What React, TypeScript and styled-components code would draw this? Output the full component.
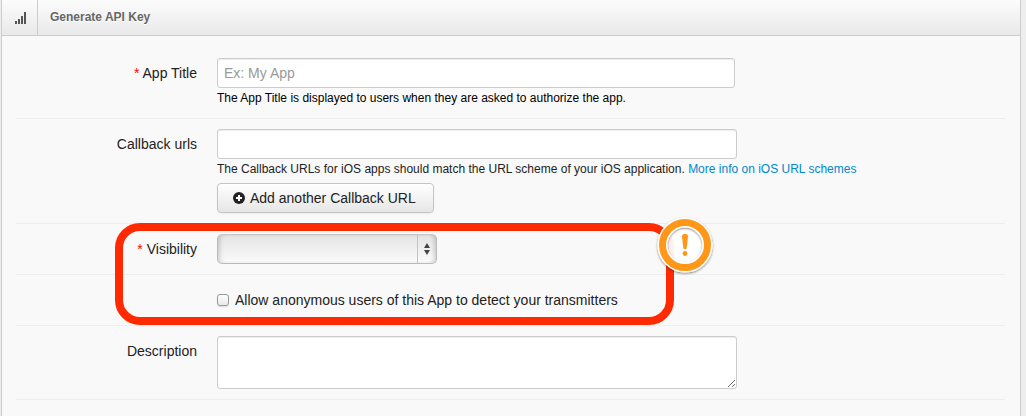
import React from "react";
import styled, { createGlobalStyle } from "styled-components";

const GlobalStyle = createGlobalStyle`
  *, *::before, *::after { box-sizing: border-box; }
  body {
    margin: 0;
    background: #eee;
    color: #222;
    font: 14px/20px "Liberation Sans", Arial, sans-serif;
  }
  input, textarea, select, button { font: inherit; color: inherit; margin: 0; }
`;

const Panel = styled.main`
  margin: 0 5px 0 1px;
  min-height: 100vh;
  background: #f9f9f9;
  border: 1px solid #ccc;
  border-width: 0 1px;
`;

const Header = styled.header`
  display: flex;
  height: 36px;
  border-bottom: 1px solid #ccc;
  background: linear-gradient(#fcfcfc, #e9e9e9);
`;

const HeaderIcon = styled.span`
  display: flex;
  align-items: center;
  justify-content: center;
  width: 36px;
  padding-left: 2px;
  border-right: 1px solid #ccc;
`;

const Title = styled.h1`
  margin: 0;
  padding: 7px 12px;
  font-size: 12px;
  line-height: 20px;
  color: #666;
  text-shadow: 0 1px 0 #fff;
`;

const Form = styled.form`
  padding: 12px 15px 0 14px;
`;

const Row = styled.div`
  display: grid;
  grid-template-columns: 181px minmax(0, 1fr);
  column-gap: 20px;
  padding: 10px 0;
  border-bottom: 1px solid #eee;
`;

const Label = styled.label`
  padding: 5px 0;
  text-align: right;
`;

const Required = styled.span`
  color: #f00;
`;

const TextInput = styled.input<{ $max: number }>`
  display: block;
  width: 100%;
  max-width: ${(p) => p.$max}px;
  height: 30px;
  padding: 4px 6px;
  background: #fff;
  border: 1px solid #ccc;
  border-radius: 3px;
  box-shadow: inset 0 1px 1px rgba(0, 0, 0, 0.075);
  &::placeholder { color: #999; opacity: 1; }
`;

const TextArea = styled.textarea`
  display: block;
  width: 100%;
  max-width: 520px;
  height: 53px;
  padding: 4px 6px;
  background: #fff;
  border: 1px solid #ccc;
  border-radius: 3px;
  box-shadow: inset 0 1px 1px rgba(0, 0, 0, 0.075);
  resize: both;
`;

const Help = styled.p<{ $strong?: boolean }>`
  margin: 0;
  font-size: 12px;
  line-height: 20px;
  color: ${(p) => (p.$strong ? "#000" : "#222")};
`;

const Link = styled.a`
  color: #08c;
  text-decoration: none;
`;

const Button = styled.button`
  display: flex;
  align-items: center;
  gap: 5px;
  height: 30px;
  margin-top: 4px;
  padding: 0 17px 0 15px;
  border: 1px solid #c5c5c5;
  border-radius: 4px;
  background: linear-gradient(#fff, #e6e6e6);
  box-shadow: 0 1px 2px rgba(0, 0, 0, 0.05);
  white-space: nowrap;
`;

const SelectBox = styled.div`
  display: grid;
  grid-template-columns: 1fr 19px;
  max-width: 220px;
  height: 30px;
  border: 1px solid #bbb;
  border-top-color: #c8c8c8;
  border-radius: 5px;
  background: linear-gradient(#e4e4e4, #fbfbfb);
  box-shadow: inset 4px 0 4px -2px rgba(0, 0, 0, 0.16), inset -4px 0 4px -2px rgba(0, 0, 0, 0.16);
`;

const Select = styled.select`
  grid-area: 1 / 1 / 2 / 3;
  appearance: none;
  width: 100%;
  padding: 0 26px 0 6px;
  border: 0;
  background: transparent;
`;

const SelectArrows = styled.span`
  grid-area: 1 / 2;
  display: flex;
  align-items: center;
  justify-content: center;
  border-left: 1px solid #c4c4c4;
  pointer-events: none;
`;

const CheckLabel = styled.label`
  grid-column: 2;
  display: flex;
  align-items: center;
  gap: 6px;
  padding: 5px 0;
`;

const Checkbox = styled.input`
  appearance: none;
  flex: none;
  width: 12px;
  height: 12px;
  border: 1px solid #999;
  border-radius: 3px;
  background: linear-gradient(#fff, #e8e8e8);
  box-shadow: 0 1px 1px rgba(0, 0, 0, 0.12);
  &:checked { background: #777; }
`;

const Highlighted = styled.div`
  position: relative;
`;

const Outline = styled.div`
  position: absolute;
  top: -1px;
  bottom: 1px;
  left: 99px;
  width: 559px;
  border: 8px solid #ff2a00;
  border-radius: 25px;
  pointer-events: none;
`;

const Warning = styled.svg`
  position: absolute;
  top: -18px;
  right: -51px;
`;

export default function App() {
  return (
    <>
      <GlobalStyle />
      <Panel>
        <Header>
          <HeaderIcon>
            <svg width="12" height="12" viewBox="0 0 12 12" fill="#555" aria-hidden="true">
              <path d="M0 9h2v3H0zM3 7h2v5H3zM6 4h2v8H6zM9 0h2v12H9z" />
            </svg>
          </HeaderIcon>
          <Title>Generate API Key</Title>
        </Header>
        <Form onSubmit={(e) => e.preventDefault()}>
          <Row>
            <Label htmlFor="title"><Required>*</Required> App Title</Label>
            <div>
              <TextInput id="title" $max={518} placeholder="Ex: My App" />
              <Help $strong>The App Title is displayed to users when they are asked to authorize the app.</Help>
            </div>
          </Row>
          <Row>
            <Label htmlFor="callback">Callback urls</Label>
            <div>
              <TextInput id="callback" $max={520} />
              <Help>
                The Callback URLs for iOS apps should match the URL scheme of your iOS application.{" "}
                <Link href="#schemes">More info on iOS URL schemes</Link>
              </Help>
              <Button type="button">
                <svg width="12" height="12" viewBox="0 0 12 12" aria-hidden="true">
                  <circle cx="6" cy="6" r="6" fill="#222" />
                  <path d="M5 3h2v2h2v2H7v2H5V7H3V5h2z" fill="#fff" />
                </svg>
                Add another Callback URL
              </Button>
            </div>
          </Row>
          <Highlighted>
            <Row>
              <Label htmlFor="visibility"><Required>*</Required> Visibility</Label>
              <SelectBox>
                <Select id="visibility" defaultValue=""><option value="" /></Select>
                <SelectArrows>
                  <svg width="8" height="14" viewBox="0 0 8 14" fill="#444" aria-hidden="true">
                    <path d="M4 1l3 5H1zM4 13l3-5H1z" />
                  </svg>
                </SelectArrows>
              </SelectBox>
            </Row>
            <Row>
              <CheckLabel>
                <Checkbox type="checkbox" />
                Allow anonymous users of this App to detect your transmitters
              </CheckLabel>
            </Row>
            <Outline>
              <Warning width="64" height="64" viewBox="0 0 64 64" role="img" aria-label="Important">
                <defs>
                  <filter id="shade" x="-20%" y="-20%" width="140%" height="140%">
                    <feDropShadow dx="0" dy="1" stdDeviation="1.2" floodColor="#000" floodOpacity="0.5" />
                  </filter>
                </defs>
                <circle cx="32" cy="32" r="18" fill="#fff" fillOpacity="0.93" />
                <circle cx="32" cy="32" r="22.5" fill="none" stroke="#fff" strokeWidth="10" filter="url(#shade)" />
                <circle cx="32" cy="32" r="22.5" fill="none" stroke="#ff9718" strokeWidth="7" />
                <path d="M29 23.4a3 2.6 0 0 1 6 0L33.8 34.6a1.8 1.8 0 0 1-3.6 0z" fill="#ff9718" />
                <circle cx="32" cy="40.5" r="2.4" fill="#ff9718" />
              </Warning>
            </Outline>
          </Highlighted>
          <Row>
            <Label htmlFor="description">Description</Label>
            <TextArea id="description" />
          </Row>
        </Form>
      </Panel>
    </>
  );
}
